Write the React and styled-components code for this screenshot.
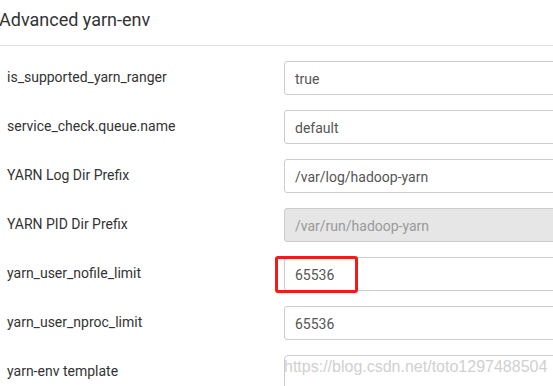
import React from "react";
import styled, { createGlobalStyle } from "styled-components";

const Global = createGlobalStyle`
  html, body { margin: 0; padding: 0; background: #fff; }
  body { font-family: Roboto, "Liberation Sans", Arial, sans-serif; overflow: hidden; width: 553px; height: 386px; }
`;

const Page = styled.div`
  width: 553px;
  height: 386px;
  overflow: hidden;
`;

const Header = styled.h2`
  margin: 0;
  padding: 9px 0 0;
  height: 36px;
  line-height: 21px;
  font-size: 18px;
  font-weight: 400;
  color: #333;
  border-bottom: 1px solid #e2e2e2;
  text-indent: -1px;
`;

const Form = styled.div`
  display: flex;
  flex-direction: column;
  gap: 15px;
  padding-top: 15px;
`;

const Row = styled.div`
  display: grid;
  grid-template-columns: 284px 330px;
  align-items: start;
`;

const Label = styled.div`
  padding: 8px 0 0 7px;
  font-size: 14px;
  line-height: 16px;
  color: #333;
`;

const Field = styled.div`
  position: relative;
`;

const Input = styled.div`
  box-sizing: border-box;
  height: 34px;
  padding: 7px 10px 5px;
  line-height: 20px;
  font-size: 14px;
  color: ${(p) => (p.disabled ? "#999" : "#555")};
  background: ${(p) => (p.disabled ? "#e6e6e6" : "#fff")};
  border: 1px solid #ccc;
  border-radius: 3px;
  white-space: nowrap;
`;

const TextArea = styled.div`
  box-sizing: border-box;
  height: 80px;
  border: 1px solid #ccc;
  border-radius: 4px;
  background: #fff;
`;

const Highlight = styled.div`
  position: absolute;
  left: -9px;
  top: -1px;
  width: 83px;
  height: 37px;
  box-sizing: border-box;
  border: 3px solid #f21b1b;
  border-radius: 3px;
`;

const Watermark = styled.div`
  position: absolute;
  left: 0;
  top: 2px;
  font-family: "Liberation Sans", Arial, sans-serif;
  font-size: 16px;
  line-height: 20px;
  color: #d0d0d0;
  white-space: nowrap;
`;

const rows = [
  { label: "is_supported_yarn_ranger", value: "true" },
  { label: "service_check.queue.name", value: "default" },
  { label: "YARN Log Dir Prefix", value: "/var/log/hadoop-yarn" },
  { label: "YARN PID Dir Prefix", value: "/var/run/hadoop-yarn", disabled: true },
  { label: "yarn_user_nofile_limit", value: "65536", highlight: true },
  { label: "yarn_user_nproc_limit", value: "65536" },
];

export default function App() {
  return (
    <Page>
      <Global />
      <Header>Advanced yarn-env</Header>
      <Form>
        {rows.map((r) => (
          <Row key={r.label}>
            <Label>{r.label}</Label>
            <Field>
              <Input disabled={r.disabled}>{r.value}</Input>
              {r.highlight && <Highlight />}
            </Field>
          </Row>
        ))}
        <Row>
          <Label>yarn-env template</Label>
          <Field>
            <TextArea />
            <Watermark>https://blog.csdn.net/toto1297488504</Watermark>
          </Field>
        </Row>
      </Form>
    </Page>
  );
}
